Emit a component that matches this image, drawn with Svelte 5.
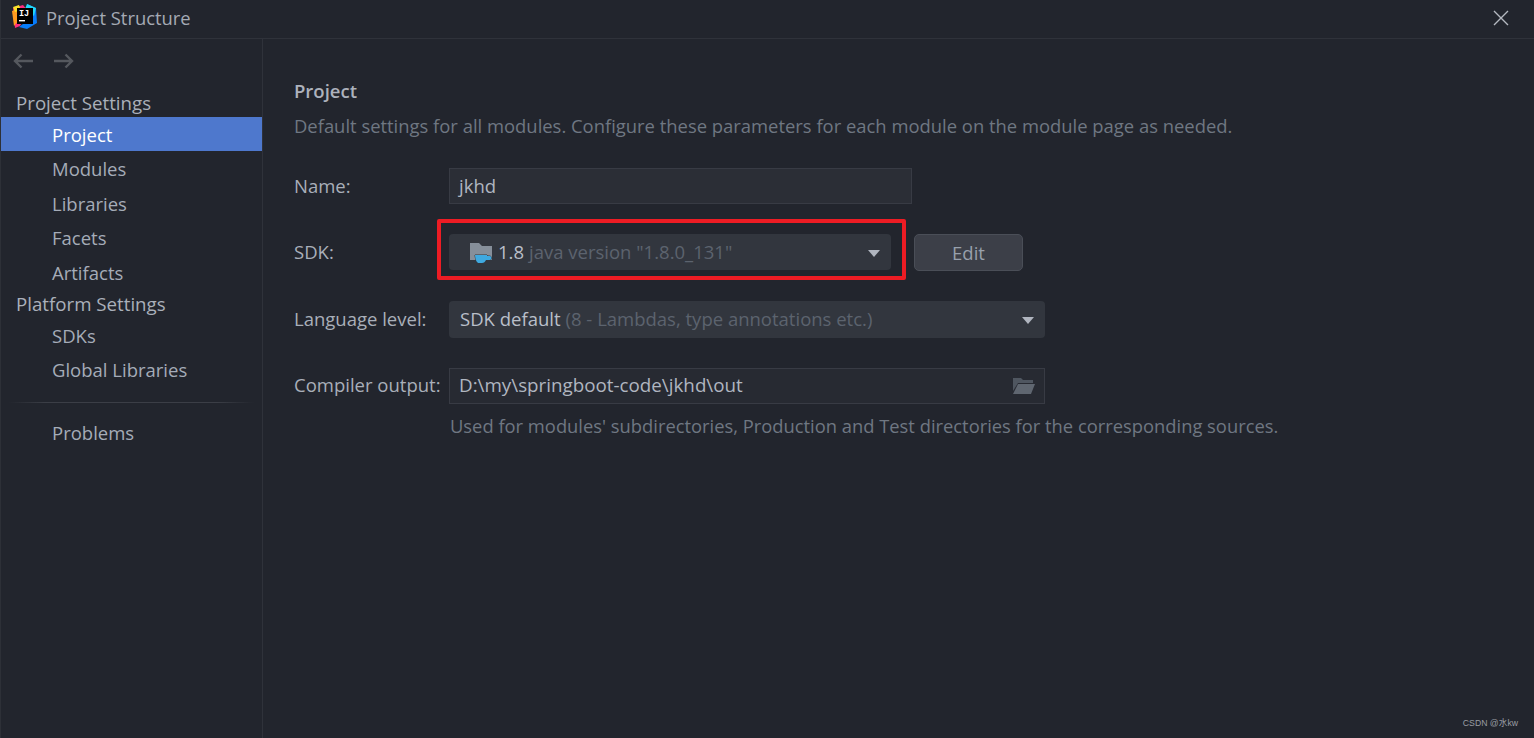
<script>
  const groups = [
    { title: "Project Settings", items: ["Project", "Modules", "Libraries", "Facets", "Artifacts"] },
    { title: "Platform Settings", items: ["SDKs", "Global Libraries"] }
  ];
  let selected = "Project";
</script>

<div class="window">
  <header class="titlebar">
    <svg class="logo" width="26" height="26" viewBox="0 0 26 26">
      <path fill="#ff2d7e" d="M1 4l10-3 5 6-8 15-5 2z" />
      <path fill="#ff9a1f" d="M0 7l5-2 3 10-6 7z" />
      <path fill="#f9e12a" d="M1 3l6-2 2 5-6 2z" />
      <path fill="#087cfa" d="M15 0l9 4 1 15-10 6-8-2 8-6z" />
      <path fill="#21d7f7" d="M15 0l9 4-2 8-9-7z" />
      <rect x="5" y="4" width="16" height="16" fill="#000" />
      <text x="7" y="12" class="logo-text">IJ</text>
      <rect x="7" y="16" width="6" height="1.4" fill="#fff" />
    </svg>
    <span class="title">Project Structure</span>
    <svg class="close" width="16" height="16" viewBox="0 0 16 16">
      <path d="M1 1l14 14M15 1L1 15" stroke="#b4b8c0" stroke-width="1.4" fill="none" />
    </svg>
  </header>

  <div class="body">
    <aside class="sidebar">
      <div class="nav-arrows">
        <svg width="22" height="16" viewBox="0 0 22 16">
          <path d="M21 8H3M9.500 1.500L3 8l6.500 6.500" stroke="#55585e" stroke-width="2.400" fill="none" />
        </svg>
        <svg width="22" height="16" viewBox="0 0 22 16">
          <path d="M1 8h18M12.500 1.500L19 8l-6.500 6.500" stroke="#55585e" stroke-width="2.400" fill="none" />
        </svg>
      </div>

      {#each groups as group}
        <div class="group-title">{group.title}</div>
        {#each group.items as item}
          <div class="item" class:selected={item === selected}>{item}</div>
        {/each}
      {/each}

      <div class="separator"></div>
      <div class="item">Problems</div>
    </aside>

    <main class="content">
      <h1>Project</h1>
      <p class="desc">Default settings for all modules. Configure these parameters for each module on the module page as needed.</p>

      <div class="row name-row">
        <span class="label">Name:</span>
        <div class="field name-field">jkhd</div>
      </div>

      <div class="row sdk-row">
        <span class="label">SDK:</span>
        <div class="combo sdk-combo">
          <svg class="jdk" width="24" height="22" viewBox="0 0 24 22">
            <path fill="#868f9a" d="M1 1h9l3 3h10v14H1z" />
            <path fill="#3fa9e0" stroke="#32363e" stroke-width="1" paint-order="stroke" d="M6 13h12v1h2.500a2 2 0 0 1 0 4H17c-1 2-2 3-4 3H10c-2 0-3.500-2.500-4-8z" />
          </svg>
          <span class="value">1.8</span>
          <span class="muted">java version "1.8.0_131"</span>
          <span class="arrow"></span>
        </div>
        <div class="button">Edit</div>
        <div class="highlight"></div>
      </div>

      <div class="row lang-row">
        <span class="label">Language level:</span>
        <div class="combo lang-combo">
          <span class="value">SDK default</span>
          <span class="muted">(8 - Lambdas, type annotations etc.)</span>
          <span class="arrow"></span>
        </div>
      </div>

      <div class="row output-row">
        <span class="label">Compiler output:</span>
        <div class="field output-field">
          <span>D:\my\springboot-code\jkhd\out</span>
          <svg class="browse" width="24" height="18" viewBox="0 0 24 18">
            <path fill="#4f5660" d="M1 1h8l2 2h10v3H6L1 14z" />
            <path fill="#5f6670" d="M6 7h17l-4 10H1z" />
          </svg>
        </div>
      </div>

      <p class="hint">Used for modules' subdirectories, Production and Test directories for the corresponding sources.</p>
    </main>
  </div>

  <div class="watermark">CSDN @水kw</div>
</div>

<style>
  :global(body) {
    margin: 0;
    background: #22252d;
  }

  .window {
    position: relative;
    height: 738px;
    overflow: hidden;
    display: flex;
    flex-direction: column;
    background: #22252d;
    color: #b4b9c3;
    font-family: "Open Sans", "Noto Sans CJK SC", sans-serif;
    font-size: 18.500px;
    border-left: 1px solid #2d3037;
    box-sizing: border-box;
  }

  .titlebar {
    height: 38px;
    flex: none;
    display: flex;
    align-items: center;
    border-bottom: 1px solid #2f323a;
    padding-left: 11px;
  }

  .logo {
    margin-right: 8px;
    margin-bottom: 4px;
  }

  .logo-text {
    font-family: "Liberation Mono", monospace;
    font-weight: 700;
    font-size: 8.500px;
    fill: #fff;
  }

  .title {
    color: #a5aab4;
    font-size: 18.400px;
    margin-bottom: 4px;
  }

  .close {
    margin-left: auto;
    margin-right: 25px;
    margin-bottom: 2px;
  }

  .body {
    flex: 1;
    display: flex;
    min-height: 0;
  }

  .sidebar {
    width: 261px;
    flex: none;
    border-right: 1px solid #2f323a;
  }

  .nav-arrows {
    display: flex;
    gap: 19px;
    padding: 14px 0 0 11px;
    height: 36px;
  }

  .group-title {
    height: 29px;
    line-height: 30px;
    padding-left: 15px;
    font-size: 18.700px;
    color: #aab0ba;
  }

  .nav-arrows + .group-title {
    height: 28px;
    line-height: 28px;
  }

  .item {
    height: 34.400px;
    line-height: 35px;
    padding-left: 51px;
    color: #a5acb8;
  }

  .selected {
    background: #4e78cd;
    color: #fff;
  }

  .separator {
    height: 1px;
    margin: 15px 8px 12px;
    background: linear-gradient(90deg, transparent, #3b3e46 15%, #3b3e46 85%, transparent);
  }

  .content {
    flex: 1;
    padding: 38px 0 0 31px;
  }

  h1 {
    margin: 0;
    font-size: 18.500px;
    font-weight: 600;
    line-height: 28px;
    color: #adb2bc;
  }

  .desc,
  .hint {
    margin: 0;
    color: #6f7782;
    line-height: 28px;
  }

  .desc {
    margin-top: 7px;
    font-size: 18.420px;
  }

  .row {
    position: relative;
    display: flex;
    align-items: center;
  }

  .label {
    width: 155px;
    flex: none;
    color: #a9afb9;
    margin-bottom: 2px;
  }

  .name-row {
    margin-top: 28px;
  }

  .sdk-row {
    margin-top: 30px;
    align-items: flex-start;
  }

  .sdk-row .label {
    margin-top: 5px;
    margin-bottom: 0;
  }

  .lang-row {
    margin-top: 30px;
  }

  .output-row {
    margin-top: 30px;
  }

  .output-row .label {
    margin-bottom: 4px;
  }

  .field {
    box-sizing: border-box;
    border: 1px solid #383b44;
    background: #2b2e36;
    display: flex;
    align-items: center;
    padding: 0 0 2px 9px;
    color: #b0b6c0;
  }

  .name-field {
    width: 463px;
    height: 36px;
  }

  .output-field {
    width: 596px;
    height: 36px;
    justify-content: space-between;
    padding-right: 8px;
    background: #272a32;
    font-size: 18.800px;
  }

  .browse {
    margin-top: 2px;
  }

  .combo {
    box-sizing: border-box;
    height: 37px;
    border-radius: 4px;
    background: #32363e;
    display: flex;
    align-items: center;
    gap: 5px;
    padding: 0 0 2px 11px;
    position: relative;
  }

  .sdk-combo {
    width: 442px;
    height: 36px;
    padding-left: 20px;
  }

  .jdk {
    margin-top: 4px;
  }

  .lang-combo {
    width: 596px;
  }

  .value {
    color: #b9bfc9;
  }

  .muted {
    color: #5c636e;
  }

  .arrow {
    position: absolute;
    right: 11px;
    top: 16px;
    border-left: 6.500px solid transparent;
    border-right: 6.500px solid transparent;
    border-top: 7px solid #b0b5bf;
  }

  .button {
    box-sizing: border-box;
    width: 109px;
    height: 37px;
    margin-left: 23px;
    border: 1px solid #4a4e57;
    border-radius: 5px;
    background: #3c3f48;
    color: #98a0ac;
    display: flex;
    align-items: center;
    justify-content: center;
  }

  .highlight {
    position: absolute;
    left: 143px;
    top: -15px;
    width: 469px;
    height: 61px;
    box-sizing: border-box;
    border: 4px solid #ed1c24;
    border-radius: 2px;
  }

  .hint {
    margin-top: 8px;
    margin-left: 156px;
    font-size: 18.350px;
  }

  .watermark {
    position: absolute;
    right: 16px;
    bottom: 9px;
    font-family: "Liberation Sans", "Noto Sans CJK SC", sans-serif;
    font-size: 8.700px;
    color: #9a9da3;
  }
</style>
